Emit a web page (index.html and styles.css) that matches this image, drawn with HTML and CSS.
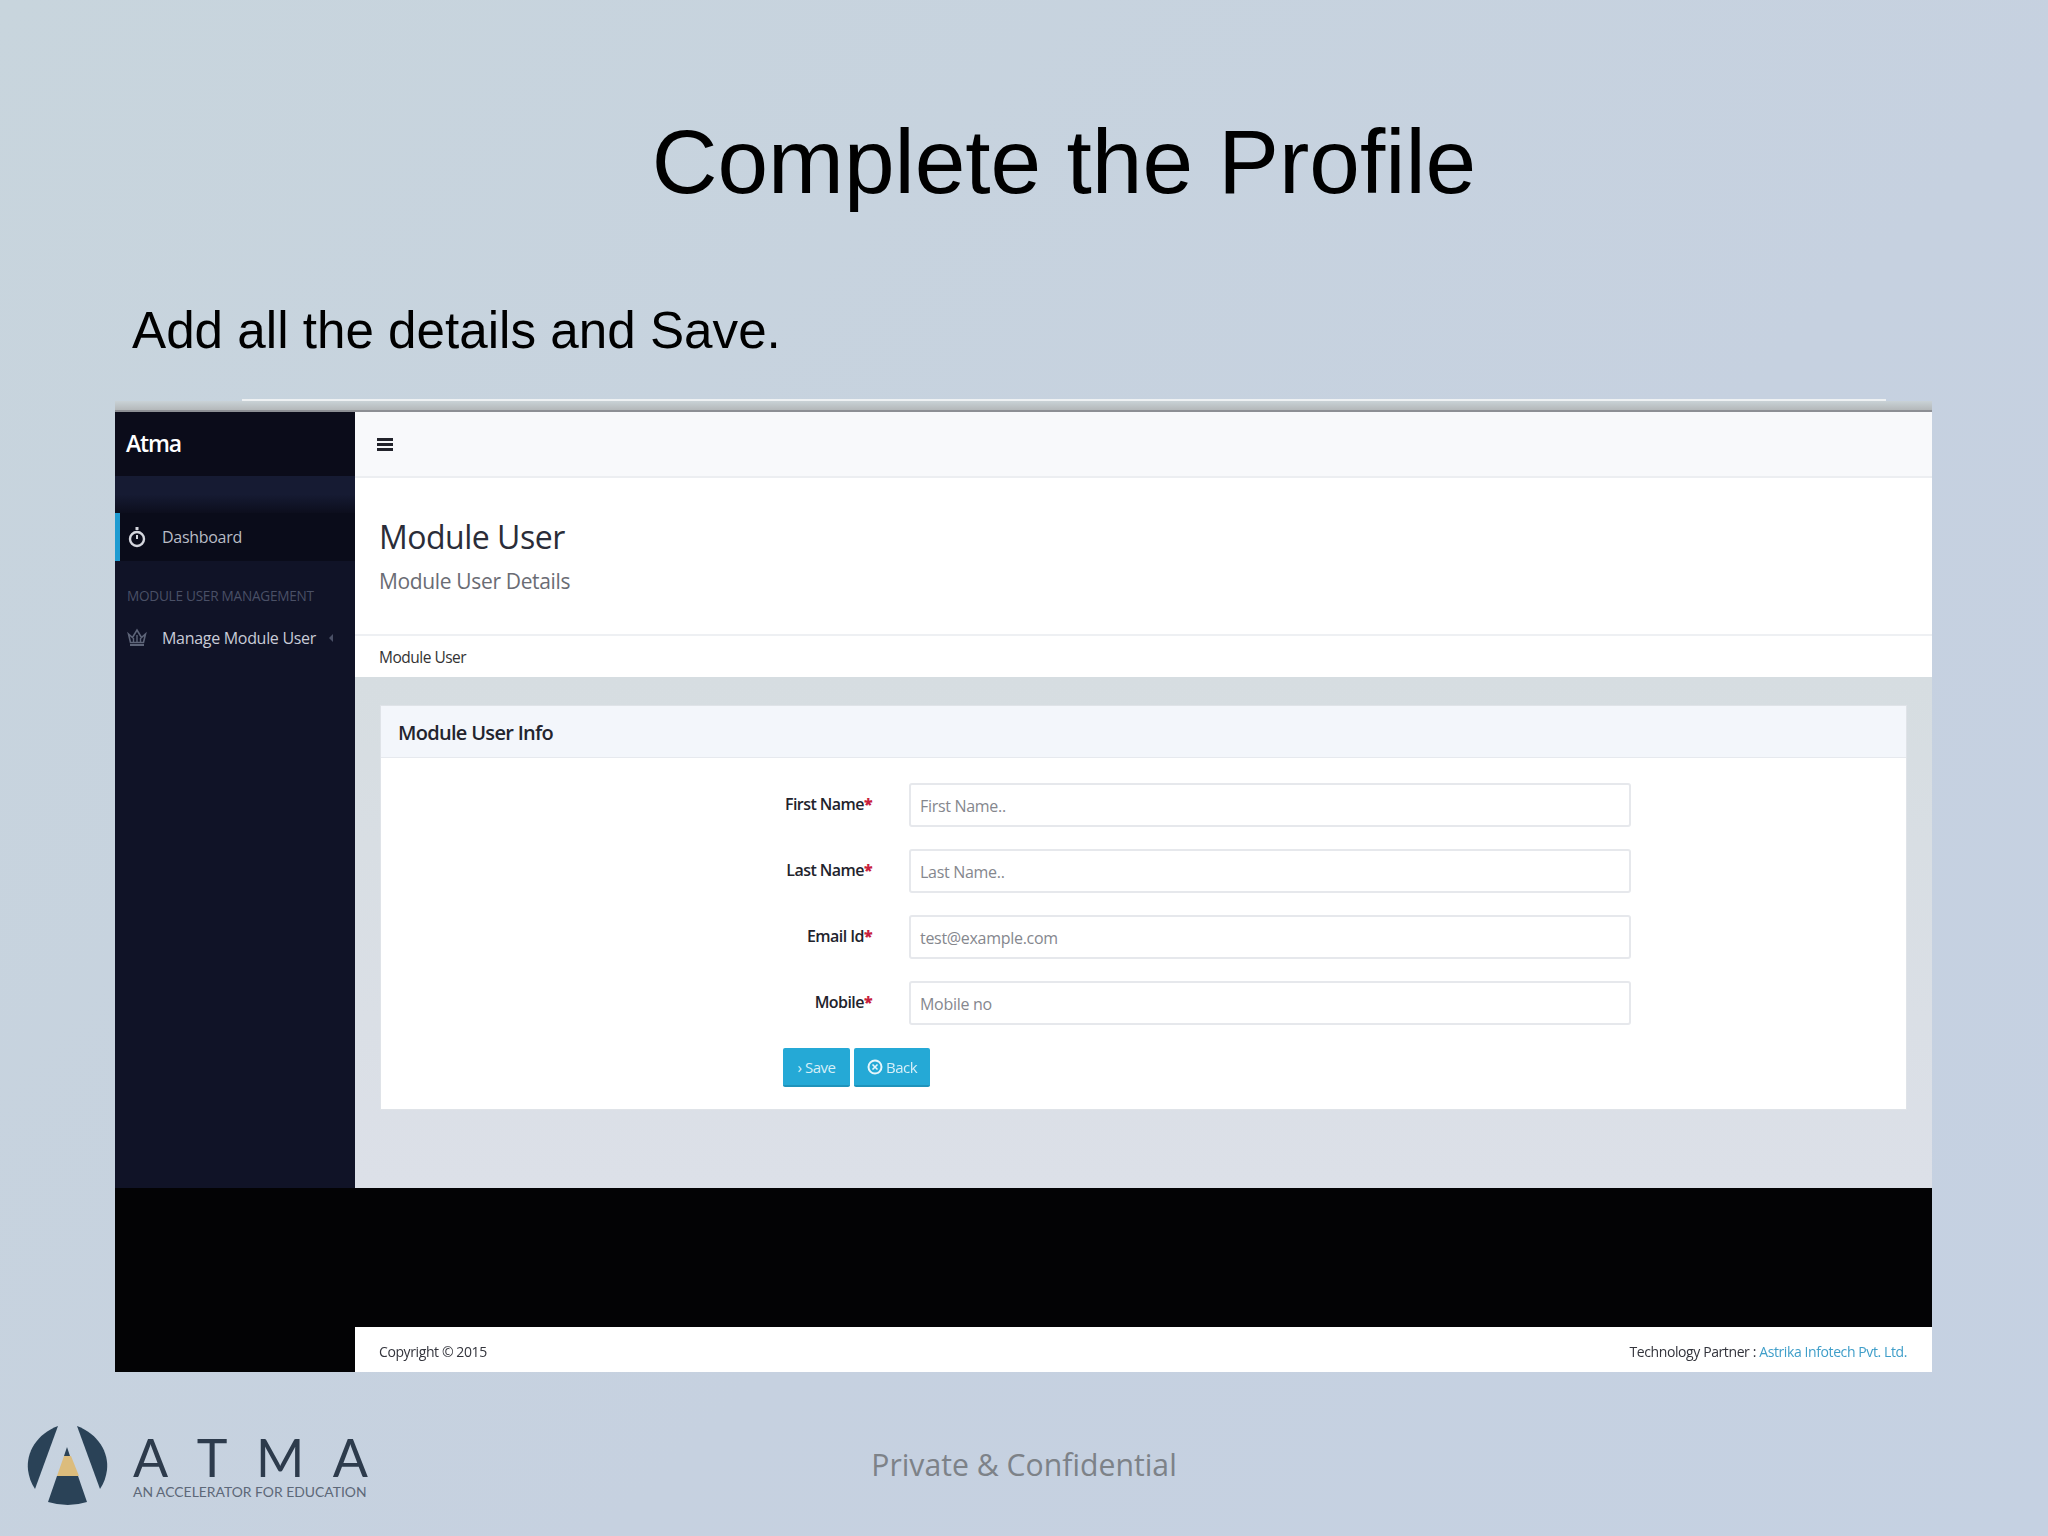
FILE: index.html
```html
<!DOCTYPE html>
<html lang="en">
<head>
    <meta charset="UTF-8">
    <title>Complete the Profile</title>
    <link rel="stylesheet" href="styles.css">
</head>
<body>
<div class="slide">
    <h1 class="slide-title">Complete the Profile</h1>
    <p class="slide-text">Add all the details and Save.</p>
    <div class="rule"></div>
    <div class="shot-edge"></div>

    <div class="shot">
        <div class="shot-top">
            <aside class="sidebar">
                <div class="brand">Atma</div>
                <div class="sidebar-band"></div>
                <div class="nav-item nav-active">
                    <svg class="nav-icon" viewBox="0 0 20 22" width="20" height="22">
                        <circle cx="10" cy="13" r="7" fill="none" stroke="#d5d7de" stroke-width="2.4"/>
                        <rect x="8.5" y="1" width="3" height="3" fill="#d5d7de"/>
                        <path d="M10 9v4" stroke="#d5d7de" stroke-width="2"/>
                    </svg>
                    <span>Dashboard</span>
                </div>
                <div class="nav-heading">MODULE USER MANAGEMENT</div>
                <div class="nav-item nav-sub">
                    <svg class="nav-icon" viewBox="0 0 20 20" width="20" height="20">
                        <path d="M1.5 6l4 3.5L10 2l4.5 7.5 4-3.5-2 8.5h-13z" fill="none" stroke="#5d6478" stroke-width="1.6"/>
                        <path d="M10 7v7M6.5 10v4M13.5 10v4" stroke="#5d6478" stroke-width="1.4"/>
                        <rect x="3" y="16" width="14" height="2" fill="#5d6478"/>
                    </svg>
                    <span class="nav-label">Manage Module User</span>
                    <span class="nav-caret"></span>
                </div>
            </aside>

            <main class="main">
                <div class="topbar">
                    <div class="burger"><i></i><i></i><i></i></div>
                </div>
                <div class="page-head">
                    <h2>Module User</h2>
                    <div class="page-sub">Module User Details</div>
                </div>
                <div class="crumb">Module User</div>
                <div class="content">
                    <div class="panel">
                        <div class="panel-head">Module User Info</div>
                        <form class="form">
                            <label class="field-label">First Name<b>*</b></label>
                            <div class="field">First Name..</div>
                            <label class="field-label">Last Name<b>*</b></label>
                            <div class="field">Last Name..</div>
                            <label class="field-label">Email Id<b>*</b></label>
                            <div class="field">test@example.com</div>
                            <label class="field-label">Mobile<b>*</b></label>
                            <div class="field">Mobile no</div>
                        </form>
                        <div class="actions">
                            <span class="btn btn-save">› Save</span>
                            <span class="btn btn-back">
                                <svg viewBox="0 0 16 16" width="16" height="16">
                                    <circle cx="8" cy="8" r="6.5" fill="none" stroke="#e8f6fb" stroke-width="2"/>
                                    <path d="M5.5 5.5l5 5M10.5 5.5l-5 5" stroke="#e8f6fb" stroke-width="1.6"/>
                                </svg>
                                Back
                            </span>
                        </div>
                    </div>
                </div>
            </main>
        </div>
        <div class="shot-black"></div>
        <div class="shot-bottom">
            <div class="shot-bottom-side"></div>
            <footer class="shot-footer">
                <span>Copyright © 2015</span>
                <span>Technology Partner : <a>Astrika Infotech Pvt. Ltd.</a></span>
            </footer>
        </div>
    </div>

    <div class="slide-foot">
        <div class="logo">
            <svg class="logo-mark" viewBox="0 0 90 90" width="90" height="90">
                <path d="M33 4C12 12 1 30 3 48c1 7 3 13 7 19z" fill="#2a4257"/>
                <path d="M52 4c21 8 32 26 30 44-1 7-3 13-7 19z" fill="#2a4257"/>
                <path d="M42 25l3 9h-6z" fill="#2a4257"/>
                <path d="M39 34h7l8 20H32z" fill="#dcbc7c"/>
                <path d="M32 54h21l9 26q-19 6-39 0z" fill="#2a4257"/>
            </svg>
            <div class="logo-text">
                <div class="logo-name"><span>A</span><span>T</span><span>M</span><span>A</span></div>
                <div class="logo-tag">AN ACCELERATOR FOR EDUCATION</div>
            </div>
        </div>
        <div class="confidential">Private &amp; Confidential</div>
        <div></div>
    </div>
</div>
</body>
</html>
```

FILE: styles.css
```css
html, body {
    margin: 0;
    height: 100%;
}
body {
    font-family: "Liberation Sans", Arial, sans-serif;
}
.slide {
    width: 2048px;
    height: 1536px;
    overflow: hidden;
    background: linear-gradient(135deg, #c8d5dd 0%, #c6d1e0 60%, #c5d1e2 100%);
    display: flex;
    flex-direction: column;
}
.slide-title {
    margin: 112px 0 0;
    padding-left: 80px;
    height: 100px;
    line-height: 100px;
    text-align: center;
    font-size: 91px;
    font-weight: 400;
    color: #000;
}
.slide-text {
    margin: 91px 0 0 132px;
    height: 56px;
    line-height: 56px;
    font-size: 51.2px;
    color: #000;
}
.rule {
    margin: 40px 162px 0 242px;
    height: 2px;
    background: #eef1f3;
}
.shot-edge {
    margin-left: 115px;
    width: 1817px;
    height: 9px;
    background: linear-gradient(#c9d2d6, #b4b8ba);
}
.shot {
    margin-left: 115px;
    width: 1817px;
    height: 962px;
    display: flex;
    flex-direction: column;
    font-family: "Open Sans", sans-serif;
    border-top: 2px solid #8d8f94;
    box-sizing: border-box;
    filter: blur(0.6px);
}
.shot-top {
    display: flex;
    height: 776px;
}

/* sidebar */
.sidebar {
    width: 240px;
    flex-shrink: 0;
    background: #101327;
    color: #d5d7de;
}
.brand {
    height: 64px;
    line-height: 62px;
    padding-left: 11px;
    background: #0b0c1a;
    color: #fff;
    font-size: 23px;
    font-weight: 600;
    letter-spacing: -1.2px;
}
.sidebar-band {
    height: 37px;
    background: linear-gradient(#161b33 50%, #0c0e1d);
}
.nav-item {
    display: flex;
    align-items: center;
    height: 48px;
    padding-left: 12px;
    font-size: 16px;
    letter-spacing: -0.3px;
}
.nav-active {
    background: #0a0c1a;
    border-left: 5px solid #1f9bd1;
    padding-left: 7px;
    color: #b9bcc6;
}
.nav-icon {
    margin-right: 15px;
    flex-shrink: 0;
}
.nav-heading {
    margin-top: 25px;
    height: 20px;
    line-height: 20px;
    padding-left: 12px;
    font-size: 13.6px;
    letter-spacing: -0.25px;
    color: #4a5066;
    white-space: nowrap;
}
.nav-sub {
    margin-top: 10px;
    height: 44px;
}
.nav-label {
    color: #c9ccd8;
    white-space: nowrap;
}
.nav-caret {
    margin-left: 13px;
    border: 4px solid transparent;
    border-right-color: #4a5066;
    border-left-width: 0;
}

/* main column */
.main {
    flex: 1;
    display: flex;
    flex-direction: column;
    background: #dbe0e6;
}
.topbar {
    height: 64px;
    display: flex;
    align-items: center;
    padding-left: 22px;
    background: #f8f9fb;
    border-bottom: 2px solid #eceef1;
}
.burger {
    width: 16px;
    display: flex;
    flex-direction: column;
    gap: 2px;
}
.burger i {
    height: 3px;
    background: #22232b;
}
.page-head {
    height: 158px;
    box-sizing: border-box;
    padding: 37px 0 0 24px;
    background: #fff;
    border-bottom: 2px solid #eef0f3;
}
.page-head h2 {
    margin: 0;
    font-size: 32px;
    line-height: 44px;
    font-weight: 400;
    letter-spacing: -0.5px;
    color: #2b2d38;
}
.page-sub {
    margin-top: 7px;
    font-size: 21px;
    line-height: 30px;
    letter-spacing: -0.35px;
    color: #6a6c74;
}
.crumb {
    height: 41px;
    line-height: 43px;
    padding-left: 24px;
    background: #fff;
    font-size: 15.5px;
    letter-spacing: -0.5px;
    color: #333;
}
.content {
    flex: 1;
    padding: 28px 25px 0;
    background: linear-gradient(#d6dde1, #dce0e8);
}
.panel {
    height: 405px;
    background: #fff;
    border: 1px solid #dfe3e8;
    box-sizing: border-box;
}
.panel-head {
    height: 52px;
    line-height: 54px;
    padding-left: 17px;
    background: #f3f6fb;
    border-bottom: 1px solid #e6e9ee;
    box-sizing: border-box;
    font-size: 20px;
    font-weight: 600;
    letter-spacing: -0.7px;
    color: #23242e;
}
.form {
    margin: 25px 0 0 259px;
    display: grid;
    grid-template-columns: 232px 722px;
    grid-auto-rows: 44px;
    row-gap: 22px;
    column-gap: 37px;
    align-items: center;
}
.field-label {
    text-align: right;
    font-size: 16px;
    font-weight: 600;
    letter-spacing: -0.55px;
    color: #22232c;
    margin-top: -3px;
}
.field-label b {
    color: #c8203c;
}
.field {
    height: 44px;
    line-height: 42px;
    padding-left: 9px;
    box-sizing: border-box;
    background: #fff;
    border: 2px solid #e6e8ec;
    border-radius: 3px;
    font-size: 16px;
    letter-spacing: -0.3px;
    color: #85878e;
}
.actions {
    margin: 23px 0 0 402px;
    display: flex;
    gap: 4px;
}
.btn {
    height: 39px;
    display: flex;
    align-items: center;
    justify-content: center;
    gap: 3px;
    box-sizing: border-box;
    background: #25a9d6;
    border-bottom: 2px solid #1f93bb;
    border-radius: 2px;
    color: #d7eff8;
    font-size: 15px;
    letter-spacing: -0.5px;
}
.btn-save {
    width: 67px;
}
.btn-back {
    width: 76px;
}

/* black strip and footer of the screenshot */
.shot-black {
    flex: 1;
    background: #030305;
}
.shot-bottom {
    display: flex;
    height: 45px;
}
.shot-bottom-side {
    width: 240px;
    flex-shrink: 0;
    background: #030305;
}
.shot-footer {
    flex: 1;
    display: flex;
    justify-content: space-between;
    align-items: center;
    padding: 3px 25px 0 24px;
    background: #fff;
    font-size: 14px;
    letter-spacing: -0.4px;
    color: #33343c;
}
.shot-footer a {
    color: #3f9ec9;
}

/* slide footer */
.slide-foot {
    flex: 1;
    display: grid;
    grid-template-columns: 1fr auto 1fr;
    align-items: center;
}
.logo {
    display: flex;
    align-items: center;
    padding: 26px 0 0 25px;
}
.logo-mark {
    flex-shrink: 0;
}
.logo-text {
    margin-left: 18px;
    width: 235px;
}
.logo-name {
    display: flex;
    justify-content: space-between;
    height: 46px;
    line-height: 46px;
    font-family: "Lato", sans-serif;
    font-weight: 400;
    font-size: 52px;
    color: #2d3b4c;
}
.logo-tag {
    margin-top: 4px;
    font-family: "Lato", sans-serif;
    font-size: 13.9px;
    line-height: 16px;
    white-space: nowrap;
    color: #5d6878;
}
.confidential {
    padding-top: 21px;
    font-family: "Open Sans", sans-serif;
    font-size: 30.2px;
    color: #7d8288;
}
```
